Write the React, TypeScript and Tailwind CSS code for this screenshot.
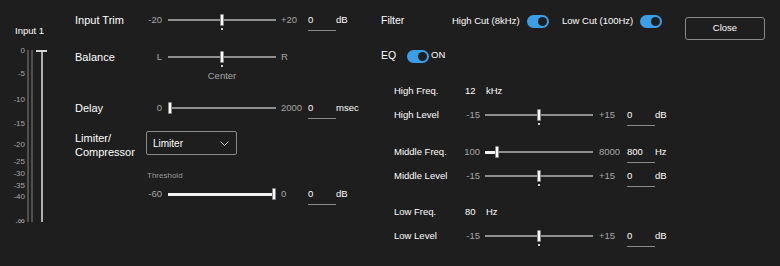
import React from "react";

type SliderProps = {
  min: string;
  max: string;
  pos: number;
  fill?: "left" | "none";
  tick?: boolean;
  value?: string;
  unit?: string;
  minCls: string;
  maxCls: string;
};

function Slider({ min, max, pos, fill = "none", tick, value, unit, minCls, maxCls }: SliderProps) {
  const x = 2 + pos * 104;
  return (
    <div className="flex items-center">
      <div className={`${minCls} text-right text-[9.5px] leading-[10px] text-[#a6a6a6]`}>{min}</div>
      <div className="relative w-[108px] h-[12px] flex items-center">
        <div className="w-full h-[2px] bg-[#8f8f8f]" />
        {fill === "left" && (
          <div className="absolute left-0 h-[3px] bg-[#f2f2f2]" style={{ width: `${x}px` }} />
        )}
        {tick && <div className="absolute left-[53px] top-[14px] w-[2px] h-[2px] bg-[#d0d0d0]" />}
        <div
          className="absolute top-0 w-[4px] h-[12px] bg-white border border-[#8a8a8a] rounded-[1px]"
          style={{ left: `${x - 2}px` }}
        />
      </div>
      <div className={`${maxCls} text-[9.5px] leading-[10px] text-[#a6a6a6]`}>{max}</div>
      {value !== undefined && (
        <div className="w-[28px] h-[22px] pt-[6px] border-b border-[#8a8a8a] text-[9.5px] leading-[10px] text-white">
          {value}
        </div>
      )}
      {unit && <div className="text-[9.5px] leading-[10px] text-white">{unit}</div>}
    </div>
  );
}

function Toggle() {
  return (
    <div className="w-[22px] h-[13px] rounded-full bg-[#3a9fe6] flex items-center justify-end pr-[2px]">
      <div className="w-[9px] h-[9px] rounded-full bg-[#1e1e1e]" />
    </div>
  );
}

const scale = [
  { t: "0", y: 1 },
  { t: "-5", y: 24 },
  { t: "-10", y: 50 },
  { t: "-15", y: 74 },
  { t: "-20", y: 95 },
  { t: "-25", y: 112 },
  { t: "-30", y: 124 },
  { t: "-35", y: 136 },
  { t: "-40", y: 147 },
];

function Meter() {
  return (
    <div className="w-[75px] shrink-0 flex flex-col">
      <div className="mt-[26px] pl-[15px] text-[9.5px] leading-[10px] text-white">Input 1</div>
      <div className="mt-[14px] flex h-[172px]">
        <div className="relative w-[27px] h-full">
          {scale.map((s) => (
            <div
              key={s.t}
              className="absolute right-[2px] text-[8px] leading-[10px] text-[#a6a6a6]"
              style={{ top: `${s.y - 5}px` }}
            >
              {s.t}
            </div>
          ))}
          <div className="absolute right-[2px] top-[165px] text-[10px] leading-[12px] text-[#a6a6a6]">
            <span className="text-[7px]">-</span>∞
          </div>
        </div>
        <div className="w-[2px] h-full bg-[#4f4f4f]" />
        <div className="ml-[2px] w-[2px] h-full bg-[#4f4f4f]" />
        <div className="relative ml-[8px] w-[2px] h-full bg-[#b0b0b0]">
          <div className="absolute left-[-5px] top-0 w-[11px] h-[2px] bg-[#d6d6d6]" />
        </div>
      </div>
    </div>
  );
}

const leftMin = "w-[16px] mr-[6px]";
const leftMax = "ml-[5px] w-[27px]";
const rightMin = "w-[20px] mr-[5px]";
const rightMax = "ml-[6px] w-[28px]";

function LeftPanel() {
  return (
    <div className="w-[306px] shrink-0 flex flex-col pt-[8px] text-white">
      <div className="flex items-center h-[24px]">
        <div className="w-[71px] text-[11px]">Input Trim</div>
        <Slider min="-20" max="+20" pos={0.5} tick value="0" unit="dB" minCls={leftMin} maxCls={leftMax} />
      </div>
      <div className="flex items-center h-[24px] mt-[13px]">
        <div className="w-[71px] text-[11px]">Balance</div>
        <Slider min="L" max="R" pos={0.5} tick minCls={leftMin} maxCls={leftMax} />
      </div>
      <div className="mt-[2px] ml-[93px] w-[108px] text-center text-[9.5px] leading-[10px] text-[#a6a6a6]">Center</div>
      <div className="flex items-center h-[24px] mt-[15px]">
        <div className="w-[71px] text-[11px]">Delay</div>
        <Slider min="0" max="2000" pos={0} value="0" unit="msec" minCls={leftMin} maxCls={leftMax} />
      </div>
      <div className="flex items-start mt-[11px]">
        <div className="w-[71px] text-[11px] leading-[14px]">
          Limiter/
          <br />
          Compressor
        </div>
        <div className="w-[91px] h-[24px] border border-[#8a8a8a] rounded-[2px] flex items-center justify-between pl-[6px] pr-[7px]">
          <span className="text-[10px]">Limiter</span>
          <svg width="9" height="5" viewBox="0 0 9 5" fill="none">
            <polyline points="0.5,0.5 4.5,4.5 8.5,0.5" stroke="#c8c8c8" strokeWidth="1" />
          </svg>
        </div>
      </div>
      <div className="mt-[12px] ml-[72px] text-[8px] leading-[10px] text-[#9a9a9a]">Threshold</div>
      <div className="flex items-center h-[24px] mt-[1px] ml-[71px]">
        <Slider min="-60" max="0" pos={1} fill="left" value="0" unit="dB" minCls={leftMin} maxCls={leftMax} />
      </div>
    </div>
  );
}

function RightPanel() {
  return (
    <div className="flex-1 flex flex-col pt-[8px] text-white">
      <div className="flex items-start">
        <div className="flex items-center h-[26px]">
          <div className="w-[71px] text-[10.5px]">Filter</div>
          <div className="w-[75px] text-[9.5px]">High Cut (8kHz)</div>
          <Toggle />
          <div className="ml-[13px] w-[78px] text-[9.5px]">Low Cut (100Hz)</div>
          <Toggle />
        </div>
        <button className="ml-[23px] mt-[9px] w-[80px] h-[23px] border border-[#8a8a8a] rounded-[3px] text-[9.5px] text-white">
          Close
        </button>
      </div>
      <div className="flex items-center h-[24px] mt-[4px]">
        <div className="w-[26px] text-[10.5px]">EQ</div>
        <Toggle />
        <div className="ml-[2px] mb-[2px] text-[9.5px]">ON</div>
      </div>
      <div className="pl-[13px] flex flex-col">
        <div className="flex items-center h-[24px] mt-[11px] text-[9.5px]">
          <div className="w-[71px]">High Freq.</div>
          <div className="w-[21px]">12</div>
          <div>kHz</div>
        </div>
        <div className="flex items-center h-[24px]">
          <div className="w-[66px] text-[9.5px]">High Level</div>
          <Slider min="-15" max="+15" pos={0.5} tick value="0" unit="dB" minCls={rightMin} maxCls={rightMax} />
        </div>
        <div className="flex items-center h-[24px] mt-[13px]">
          <div className="w-[66px] text-[9.5px]">Middle Freq.</div>
          <Slider min="100" max="8000" pos={0.1} fill="left" value="800" unit="Hz" minCls={rightMin} maxCls={rightMax} />
        </div>
        <div className="flex items-center h-[24px]">
          <div className="w-[66px] text-[9.5px]">Middle Level</div>
          <Slider min="-15" max="+15" pos={0.5} tick value="0" unit="dB" minCls={rightMin} maxCls={rightMax} />
        </div>
        <div className="flex items-center h-[24px] mt-[12px] text-[9.5px]">
          <div className="w-[71px]">Low Freq.</div>
          <div className="w-[21px]">80</div>
          <div>Hz</div>
        </div>
        <div className="flex items-center h-[24px]">
          <div className="w-[66px] text-[9.5px]">Low Level</div>
          <Slider min="-15" max="+15" pos={0.5} tick value="0" unit="dB" minCls={rightMin} maxCls={rightMax} />
        </div>
      </div>
    </div>
  );
}

export default function App() {
  return (
    <div className="w-[780px] h-[266px] overflow-hidden bg-[#1e1e1e] flex font-['Liberation_Sans',Arial,sans-serif]">
      <Meter />
      <LeftPanel />
      <RightPanel />
    </div>
  );
}
